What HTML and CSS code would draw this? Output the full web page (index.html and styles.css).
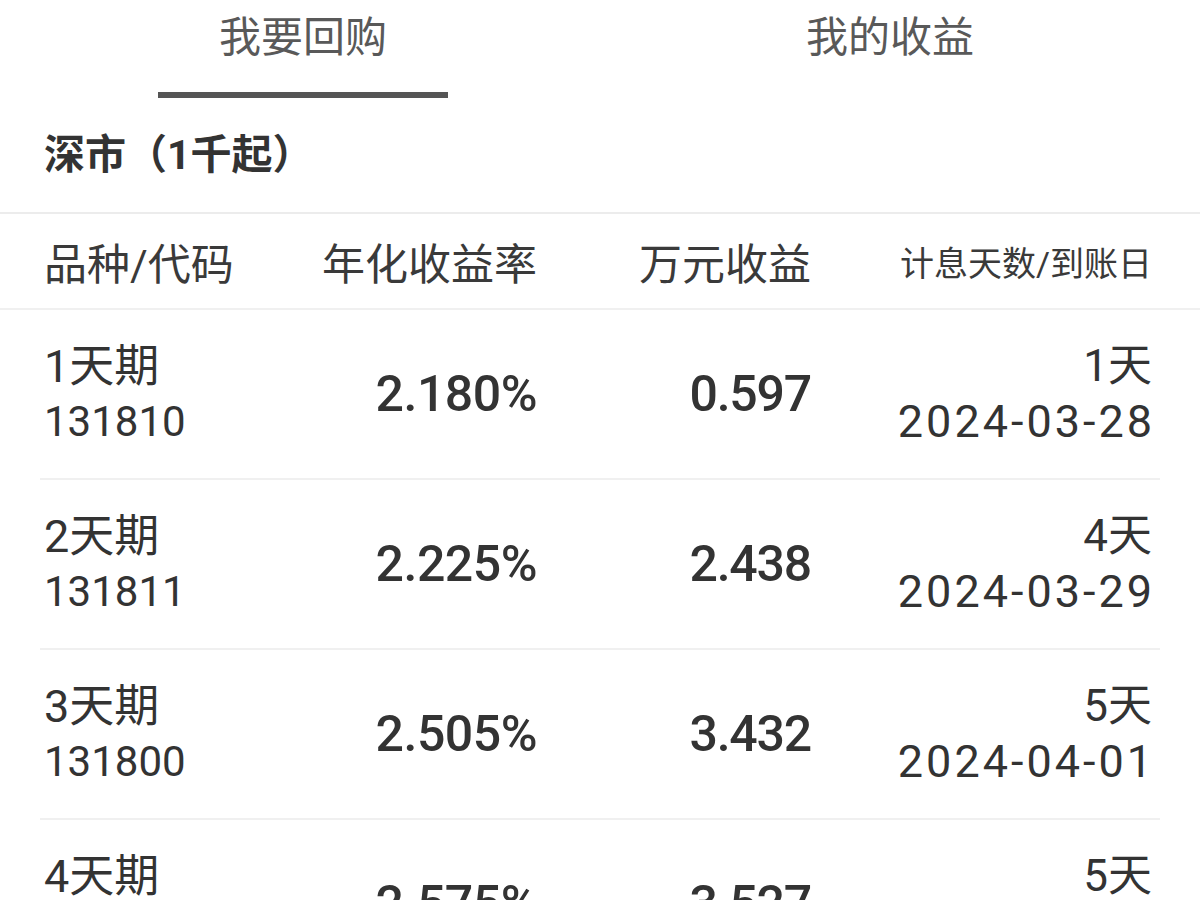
FILE: index.html
```html
<!DOCTYPE html>
<html lang="zh-CN">
<head>
    <meta charset="UTF-8">
    <meta name="viewport" content="width=device-width, initial-scale=1.0">
    <title>国债逆回购</title>
    <link rel="stylesheet" href="styles.css">
</head>
<body>
    <nav class="tabs">
        <div class="tab active">我要回购</div>
        <div class="tab">我的收益</div>
    </nav>

    <div class="market">深市（1千起）</div>

    <div class="table">
        <div class="thead">
            <div class="col-name">品种/代码</div>
            <div class="col-num">年化收益率</div>
            <div class="col-num">万元收益</div>
            <div class="col-date">计息天数/到账日</div>
        </div>

        <div class="row">
            <div class="col-name">
                <div class="term">1天期</div>
                <div>131810</div>
            </div>
            <div class="col-num rate">2.180%</div>
            <div class="col-num income">0.597</div>
            <div class="col-date">
                <div>1天</div>
                <div class="date">2024-03-28</div>
            </div>
        </div>

        <div class="row">
            <div class="col-name">
                <div class="term">2天期</div>
                <div>131811</div>
            </div>
            <div class="col-num rate">2.225%</div>
            <div class="col-num income">2.438</div>
            <div class="col-date">
                <div>4天</div>
                <div class="date">2024-03-29</div>
            </div>
        </div>

        <div class="row">
            <div class="col-name">
                <div class="term">3天期</div>
                <div>131800</div>
            </div>
            <div class="col-num rate">2.505%</div>
            <div class="col-num income">3.432</div>
            <div class="col-date">
                <div>5天</div>
                <div class="date">2024-04-01</div>
            </div>
        </div>

        <div class="row">
            <div class="col-name">
                <div class="term">4天期</div>
                <div>131809</div>
            </div>
            <div class="col-num rate">2.575%</div>
            <div class="col-num income">3.527</div>
            <div class="col-date">
                <div>5天</div>
                <div class="date">2024-04-01</div>
            </div>
        </div>
    </div>
</body>
</html>
```

FILE: styles.css
```css
html, body {
    margin: 0;
    padding: 0;
    background-color: #fff;
    overflow: hidden;
}
body {
    font-family: Roboto, "Noto Sans CJK SC", sans-serif;
    color: #333;
}

/* tab bar */
.tabs {
    display: flex;
    gap: 297px;
    padding-left: 158px;
    height: 98px;
}
.tab {
    width: 290px;
    text-align: center;
    font-size: 42px;
    line-height: 76px;
    color: #595959;
}
.tab.active::after {
    content: "";
    display: block;
    height: 6px;
    margin-top: 16px;
    background-color: #555;
}

.market {
    padding-left: 44px;
    height: 114px;
    line-height: 114px;
    font-size: 41px;
    font-weight: bold;
    border-bottom: 2px solid #ececec;
}

/* table */
.thead,
.row {
    display: grid;
    grid-template-columns: 206px 287px 274px 341px;
    align-items: center;
}
.thead {
    height: 94px;
    padding: 0 48px 0 44px;
    font-size: 43px;
    color: #3a3a3a;
    border-bottom: 2px solid #f0f0f0;
}
.thead .col-date {
    font-size: 34px;
}
.row {
    height: 170px;
    box-sizing: border-box;
    margin: 0 40px;
    padding: 0 8px 0 4px;
    border-bottom: 2px solid #f0f0f0;
}
.col-num,
.col-date {
    text-align: right;
}
.row .col-name {
    font-size: 42px;
    line-height: 55px;
}
.row .col-name .term {
    font-size: 45px;
}
.row .col-date {
    font-size: 44px;
    line-height: 55px;
}
.date {
    font-size: 45px;
    letter-spacing: 3px;
    margin-right: -3px;
}
.rate {
    font-size: 50px;
    font-weight: 500;
    letter-spacing: -0.5px;
}
.income {
    font-size: 50px;
    font-weight: 500;
    letter-spacing: -1.2px;
}
```
